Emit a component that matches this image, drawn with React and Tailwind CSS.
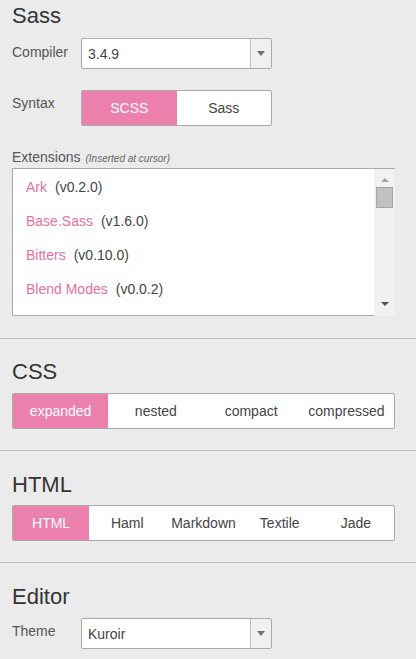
import React from 'react';

const PINK = 'bg-[#ec80ad]';

const Heading = ({ children }) => (
  <h2 className="text-[22px] leading-[26px] text-[#333]">{children}</h2>
);

const Select = ({ value }) => (
  <div className="flex h-[31px] w-[191px] rounded-[2px] border border-[#aaa] bg-white">
    <div className="flex flex-1 items-center pl-[6px] pt-[2px] text-[14px] text-[#444]">{value}</div>
    <div className="flex w-[21px] items-center justify-center border-l border-[#bbb] bg-[#f0f0f0]">
      <span className="block h-0 w-0 border-x-[4px] border-t-[5px] border-x-transparent border-t-[#707070]" />
    </div>
  </div>
);

const Toggle = ({ options, active, className }) => (
  <div className={`flex h-[36px] overflow-hidden rounded-[2px] border border-[#aaa] bg-white ${className}`}>
    {options.map((o) => (
      <div
        key={o}
        className={`flex flex-1 items-center justify-center text-[14px] ${o === active ? `${PINK} text-white` : 'text-[#444]'}`}
      >
        {o}
      </div>
    ))}
  </div>
);

const Row = ({ label, pt, children, className = '' }) => (
  <div className={`flex ${className}`}>
    <div className={`w-[69px] text-[14px] leading-[16px] text-[#555] ${pt}`}>{label}</div>
    {children}
  </div>
);

const extensions = [
  ['Ark', 'v0.2.0'],
  ['Base.Sass', 'v1.6.0'],
  ['Bitters', 'v0.10.0'],
  ['Blend Modes', 'v0.0.2'],
];

export default function App() {
  return (
    <div className="min-h-[659px] w-[416px] bg-[#ebebeb] font-['Liberation_Sans',Arial,sans-serif]">
      {/* Sass */}
      <section className="border-b border-[#bdbdbd] px-3 pb-[22px] pt-[3px]">
        <Heading>Sass</Heading>
        <Row label="Compiler" pt="pt-[6px]" className="mt-[9px]">
          <Select value="3.4.9" />
        </Row>
        <Row label="Syntax" pt="pt-[5px]" className="mt-[21px]">
          <Toggle options={['SCSS', 'Sass']} active="SCSS" className="w-[191px]" />
        </Row>
        <div className="mt-[23px] flex h-[16px] items-baseline overflow-visible text-[14px] leading-[16px] text-[#555]">
          Extensions
          <span className="ml-[5px] text-[10px] leading-none italic text-[#666]">(Inserted at cursor)</span>
        </div>
        <div className="mt-[3px] flex h-[148px] w-[383px]">
          <div className="flex-1 overflow-hidden border-y border-l border-[#aaa] bg-white pl-[13px] pt-[1px]">
            {extensions.map(([name, v]) => (
              <div key={name} className="text-[14px] leading-[34px]">
                <span className="text-[#e8709f]">{name}</span>
                <span className="ml-[8px] text-[#444]">({v})</span>
              </div>
            ))}
          </div>
          <div className="flex w-[21px] flex-col items-center border-t border-[#aaa] bg-[#f1f1f1]">
            <span className="mt-[9px] block h-0 w-0 border-x-[4px] border-b-[4px] border-x-transparent border-b-[#a3a3a3]" />
            <div className="mt-[5px] h-[21px] w-[17px] border border-[#a6a6a6] bg-[#c1c1c1]" />
            <div className="flex-1" />
            <span className="mb-[10px] block h-0 w-0 border-x-[4px] border-t-[4px] border-x-transparent border-t-[#505050]" />
          </div>
        </div>
      </section>

      {/* CSS */}
      <section className="border-b border-[#bdbdbd] px-3 pb-[21px] pt-[20px]">
        <Heading>CSS</Heading>
        <Toggle
          options={['expanded', 'nested', 'compact', 'compressed']}
          active="expanded"
          className="mt-[8px] w-[383px]"
        />
      </section>

      {/* HTML */}
      <section className="border-b border-[#bdbdbd] px-3 pb-[21px] pt-[21px]">
        <Heading>HTML</Heading>
        <Toggle
          options={['HTML', 'Haml', 'Markdown', 'Textile', 'Jade']}
          active="HTML"
          className="mt-[7px] w-[383px]"
        />
      </section>

      {/* Editor */}
      <section className="px-3 pt-[21px]">
        <Heading>Editor</Heading>
        <Row label="Theme" pt="pt-[5px]" className="mt-[8px]">
          <Select value="Kuroir" />
        </Row>
      </section>
    </div>
  );
}
